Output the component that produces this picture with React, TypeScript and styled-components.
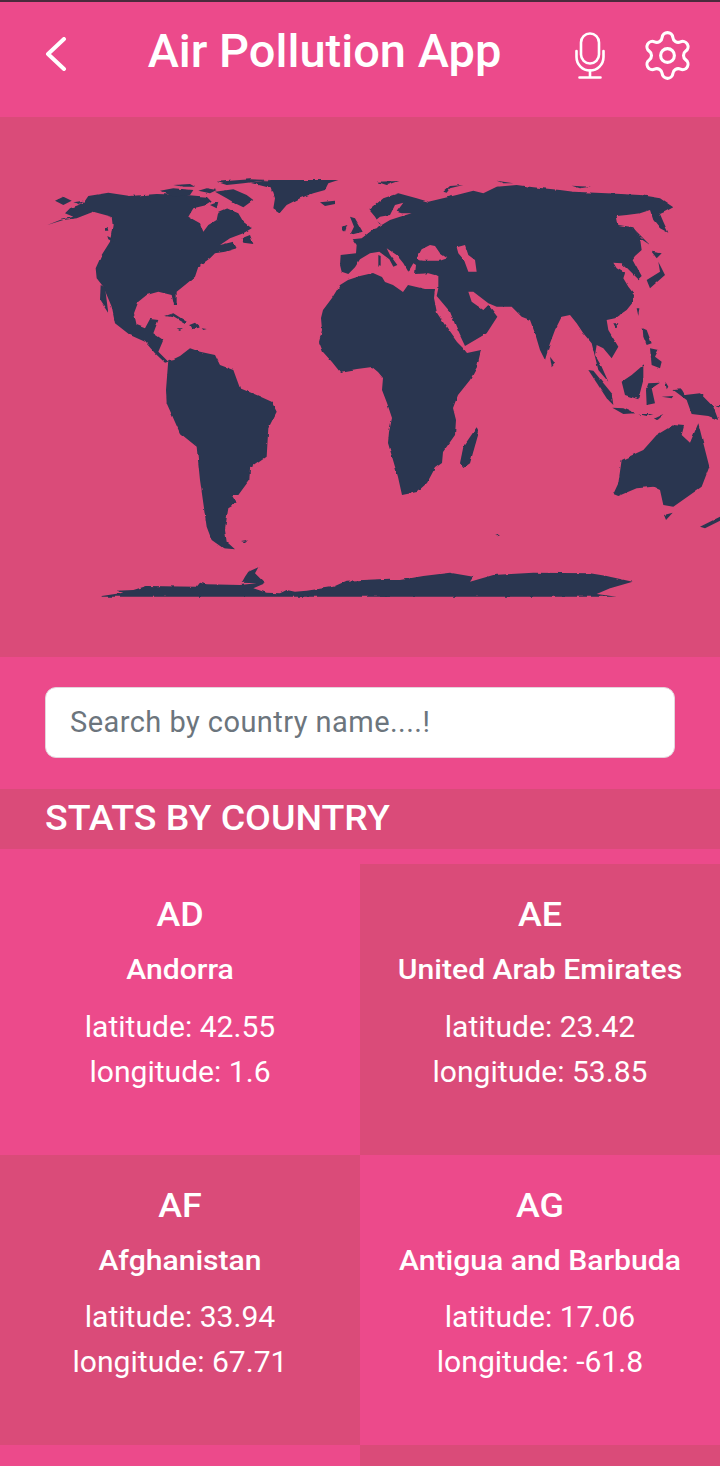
import styled, { createGlobalStyle } from "styled-components";
import { Settings } from "lucide-react";

const PINK = "#ec4a8b";
const ROSE = "#da4b79";
const NAVY = "#2a3650";

const GlobalStyle = createGlobalStyle`
  html, body {
    margin: 0;
    padding: 0;
    background: ${PINK};
  }
  * { box-sizing: border-box; }
`;

const Page = styled.div`
  width: 720px;
  height: 1466px;
  overflow: hidden;
  background: ${PINK};
  color: #fff;
  font-family: Roboto, "Liberation Sans", sans-serif;
`;

const Header = styled.header`
  height: 117px;
  border-top: 2px solid #4a2a3c;
  display: flex;
  align-items: center;
  padding: 0 30px 16px 45px;
`;

const BackIcon = styled.svg`
  width: 22px;
  height: 34px;
  flex: none;
  margin-top: 5px;
`;

const Title = styled.h1`
  flex: 1;
  margin: -3px 0 0;
  padding-left: 7px;
  font-size: 47px;
  font-weight: 500;
  line-height: 1;
  text-align: center;
  white-space: nowrap;
`;

const HeaderIcons = styled.div`
  display: flex;
  align-items: center;
  gap: 39px;
  margin-top: 8px;
`;

const MicIcon = styled.svg`
  width: 30px;
  height: 47px;
`;

const GearWrap = styled.div`
  width: 46px;
  height: 46px;
  display: flex;
  align-items: center;
  justify-content: center;
`;

const MapSection = styled.section`
  height: 540px;
  background: ${ROSE};
`;

const MapSvg = styled.svg`
  display: block;
  width: 720px;
  height: 540px;
`;

const SearchSection = styled.div`
  height: 132px;
  padding: 30px 45px 31px;
`;

const SearchInput = styled.input`
  display: block;
  width: 100%;
  height: 71px;
  border: 1px solid #e3d5dc;
  border-radius: 11px;
  background: #fff;
  padding: 0 24px 2px;
  font-family: Roboto, "Liberation Sans", sans-serif;
  font-size: 29px;
  letter-spacing: 0.45px;
  outline: none;

  &::placeholder {
    color: #6c757d;
    opacity: 1;
  }
`;

const StatsBar = styled.h2`
  height: 60px;
  margin: 0 0 15px;
  padding: 0 45px 2px;
  background: ${ROSE};
  display: flex;
  align-items: center;
  font-size: 35px;
  font-weight: 500;
`;

const StatsText = styled.span`
  transform: scaleX(1.07);
  transform-origin: left center;
  white-space: nowrap;
`;

const CardGrid = styled.div`
  display: grid;
  grid-template-columns: 1fr 1fr;
  grid-auto-rows: 290.5px;
`;

const Card = styled.article<{ $dark: boolean }>`
  background: ${(p) => (p.$dark ? ROSE : PINK)};
  text-align: center;
  padding-top: 29px;
`;

const Code = styled.div`
  font-size: 33.5px;
  font-weight: 500;
  line-height: 44px;
  margin-bottom: 16px;
  transform: scaleX(1.07);
`;

const Name = styled.div`
  font-size: 28px;
  font-weight: 500;
  line-height: 36px;
  margin-bottom: 16.5px;
  margin-top: -1px;
  transform: scaleX(1.075);
`;

const Coord = styled.div`
  font-size: 29.5px;
  line-height: 45px;
  transform: scaleX(1.02);
`;

type Country = { code: string; name: string; lat: string; lng: string; dark: boolean };

const countries: Country[] = [
  { code: "AD", name: "Andorra", lat: "42.55", lng: "1.6", dark: false },
  { code: "AE", name: "United Arab Emirates", lat: "23.42", lng: "53.85", dark: true },
  { code: "AF", name: "Afghanistan", lat: "33.94", lng: "67.71", dark: true },
  { code: "AG", name: "Antigua and Barbuda", lat: "17.06", lng: "-61.8", dark: false },
];

// land outlines, traced in three times scale from the crop origin of each group
const northAmerica = [
  "52,165 90,150 130,140 105,130 120,115 160,100 175,78 235,68 300,78 380,72 470,75 530,80 545,95 530,105 490,115 475,140 510,160 520,185 535,165 560,150 565,125 590,115 625,130 640,155 665,175 640,190 600,205 570,225 610,215 620,235 585,245 555,250 540,265 505,290 495,320 465,345 440,365 440,405 432,405 425,375 385,365 350,375 325,395 312,430 320,465 345,475 360,447 385,450 370,490 400,510 385,545 415,575 405,578 375,550 345,515 300,495 255,460 245,410 220,350 200,325 197,295 215,255 240,215 248,165 245,140 190,125 140,145 100,150",
  "212,345 225,352 235,430 210,390",
  "660,38 720,30 925,30 895,40 885,60 850,70 810,85 770,105 750,128 730,115 735,85 725,55",
  "560,35 660,28 720,30 640,40 590,45",
  "390,62 430,55 490,60 480,75 430,80",
  "430,45 480,42 495,50 460,50",
  "505,62 530,55 560,60 540,70",
  "555,65 610,58 650,75 670,90 640,112 615,100 590,85",
  "540,105 565,95 560,115",
  "635,205 660,195 670,222 640,218",
  "870,97 915,92 915,102 885,108",
  "75,92 100,80 125,92 100,105",
  "130,97 160,92 150,102",
  "405,438 430,430 470,455 465,462 430,442",
  "478,465 495,458 510,472 485,478",
  "440,475 455,475 450,480",
  "515,475 530,477 520,480",
  "225,175 232,170 235,182 225,182",
  "232,198 245,205 250,215 235,208",
];

const eurasia = [
  "2,255 48,250 50,225 38,208 65,205 100,178 110,175 120,165 105,140 88,120 130,85 175,70 230,85 265,95 350,75 400,62 430,70 470,50 530,45 580,52 660,60 700,65 800,70 900,75 960,85 1000,112 975,125 960,132 970,155 985,188 960,175 940,150 930,120 900,130 860,135 830,138 835,165 880,172 900,205 905,240 885,258 878,268 905,318 895,328 862,295 845,280 820,278 830,295 855,310 850,325 865,350 882,372 880,395 860,420 825,445 800,450 805,480 835,530 815,565 790,535 770,525 765,555 785,590 805,635 775,600 765,560 755,520 730,490 710,460 690,435 665,440 645,480 630,520 615,570 600,540 585,490 570,450 545,440 515,410 470,410 445,400 400,365 385,365 395,395 430,420 445,405 472,440 440,490 375,528 350,475 330,425 290,378 295,355 295,318 265,310 225,312 228,285 220,280 205,305 190,280 170,255 140,235 150,255 172,285 160,290 148,268 118,245 90,250 60,268 45,292 25,312 5,305 0,285",
  "30,140 45,145 68,185 30,195 42,170",
  "5,170 22,165 15,185",
  "110,35 175,33 140,45",
  "310,65 330,48 370,45 330,55 320,68",
  "470,32 520,40 490,40",
  "695,47 750,50 720,55",
  "880,175 930,225 900,205",
  "935,245 965,250 950,265",
  "955,275 975,315 930,355 920,330 960,305",
  "890,415 898,415 895,438",
  "820,460 835,460 828,475",
  "908,475 920,480 935,520 920,525 910,500",
  "930,535 955,540 945,560 965,575 960,595 935,585",
  "630,560 645,580 635,592",
  "115,255 122,258 122,290 115,288",
];

const inlandSeas = [
  "232,262 245,238 270,225 285,228 300,250 322,265 300,272 250,272 235,270",
  "350,232 375,225 385,255 405,270 410,305 385,305 372,270 355,250",
  "108,150 125,165 150,150 180,140 215,130 185,130 170,125 190,98 165,105 150,135 120,140",
];

const southAmerica = [
  "235,60 250,58 270,48 300,25 330,35 375,45 390,75 430,90 450,145 500,165 545,185 560,215 535,265 530,350 480,385 478,420 445,465 425,465 440,490 415,505 410,535 405,570 410,605 435,628 400,625 365,600 350,560 340,490 330,420 320,320 270,280 230,190 228,150",
  "453,603 470,600 465,607",
  "35,768 100,758 80,752 130,750 170,738 320,740 330,728 350,733 450,735 500,730 455,728 465,710 475,695 505,682 495,700 525,730 490,745 530,758 570,760 590,750 615,755 650,752 730,740 770,722 900,716 900,770 35,770",
];

// africa is already in page coordinates
const africa =
  "348,280 360,276 373,273 382,277 385,282 393,285 403,292 408,285 425,289 435,289 434,298 437,313 447,328 457,342 463,348 467,353 481,350 477,367 470,380 458,395 453,408 456,420 455,435 443,452 442,463 435,468 427,483 417,492 402,495 398,477 393,460 388,443 389,432 392,418 387,403 382,390 383,378 378,372 372,367 357,369 340,372 332,362 323,352 319,342 322,330 321,318 323,310 332,298 340,285";

const oceania = [
  "0,720 60,720 130,708 210,698 280,710 270,725 340,705 460,698 630,700 680,708 758,725 690,745 650,762 710,770 0,770",
  "240,370 250,320 290,262 297,275 270,370 250,384",
  "625,90 640,92 695,160 700,195 680,175",
  "725,125 755,105 790,75 790,120 775,178 735,165",
  "805,130 840,128 815,145 825,190 800,195 798,150",
  "697,203 730,205 765,220 730,222",
  "775,222 820,222 800,228",
  "822,235 850,222 830,240",
  "880,150 905,148 915,165 960,160 1000,200 1015,240 985,228 935,222 920,180",
  "700,462 715,430 725,360 790,330 830,285 880,255 912,258 905,285 930,308 955,250 970,310 988,380 965,440 880,500 850,495 840,450 820,440 770,445 715,468",
  "852,525 878,518 858,540",
  "960,560 1020,530 1020,542 975,565",
  "350,583 360,586 352,589",
  "1005,195 1020,195 1020,200",
  "845,170 880,168 875,175",
  "856,125 865,140 860,148",
];

function Land({ x, y, shapes }: { x: number; y: number; shapes: string[] }) {
  return (
    <g transform={`translate(${x} ${y}) scale(${1 / 3})`}>
      {shapes.map((points) => (
        <polygon key={points} points={points} />
      ))}
    </g>
  );
}

function WorldMap() {
  return (
    <MapSvg viewBox="0 117 720 540" fill={NAVY}>
      <defs>
        <filter id="coast" filterUnits="userSpaceOnUse" x="0" y="117" width="720" height="540" colorInterpolationFilters="sRGB">
          <feTurbulence type="fractalNoise" baseFrequency="0.13" numOctaves="2" seed="4" result="noise" />
          <feDisplacementMap in="SourceGraphic" in2="noise" scale="2.5" xChannelSelector="R" yChannelSelector="G" />
          <feGaussianBlur stdDeviation="0.35" />
        </filter>
      </defs>
      <g filter="url(#coast)">
        <Land x={30} y={170} shapes={northAmerica} />
        <polygon points={africa} />
        <Land x={340} y={170} shapes={eurasia} />
        <g fill={ROSE}>
          <Land x={340} y={170} shapes={inlandSeas} />
        </g>
        <Land x={90} y={340} shapes={southAmerica} />
        <Land x={380} y={340} shapes={oceania} />
      </g>
    </MapSvg>
  );
}

export default function App() {
  return (
    <Page>
      <GlobalStyle />
      <Header>
        <BackIcon viewBox="0 0 22 34" fill="none" stroke="#fff" strokeWidth="4" strokeLinecap="round" strokeLinejoin="round">
          <path d="M19 2 3 17l16 15" />
        </BackIcon>
        <Title>Air Pollution App</Title>
        <HeaderIcons>
          <MicIcon viewBox="0 0 30 47" fill="none" stroke="#fff" strokeWidth="2.6" strokeLinecap="round">
            <rect x="6" y="1.5" width="18" height="30" rx="9" />
            <path d="M1.5 19v6a13.5 13.5 0 0 0 27 0v-6" />
            <path d="M15 38.5V45M4.5 45.5h21" />
          </MicIcon>
          <GearWrap>
            <Settings size={55} strokeWidth={1.35} color="#fff" style={{ flex: "none" }} />
          </GearWrap>
        </HeaderIcons>
      </Header>
      <MapSection>
        <WorldMap />
      </MapSection>
      <SearchSection>
        <SearchInput placeholder="Search by country name....!" />
      </SearchSection>
      <StatsBar>
        <StatsText>STATS BY COUNTRY</StatsText>
      </StatsBar>
      <CardGrid>
        {countries.map((c) => (
          <Card key={c.code} $dark={c.dark}>
            <Code>{c.code}</Code>
            <Name>{c.name}</Name>
            <Coord>latitude: {c.lat}</Coord>
            <Coord>longitude: {c.lng}</Coord>
          </Card>
        ))}
        {/* next row only just starts at the bottom edge of the screen */}
        <Card $dark={false} />
        <Card $dark />
      </CardGrid>
    </Page>
  );
}
